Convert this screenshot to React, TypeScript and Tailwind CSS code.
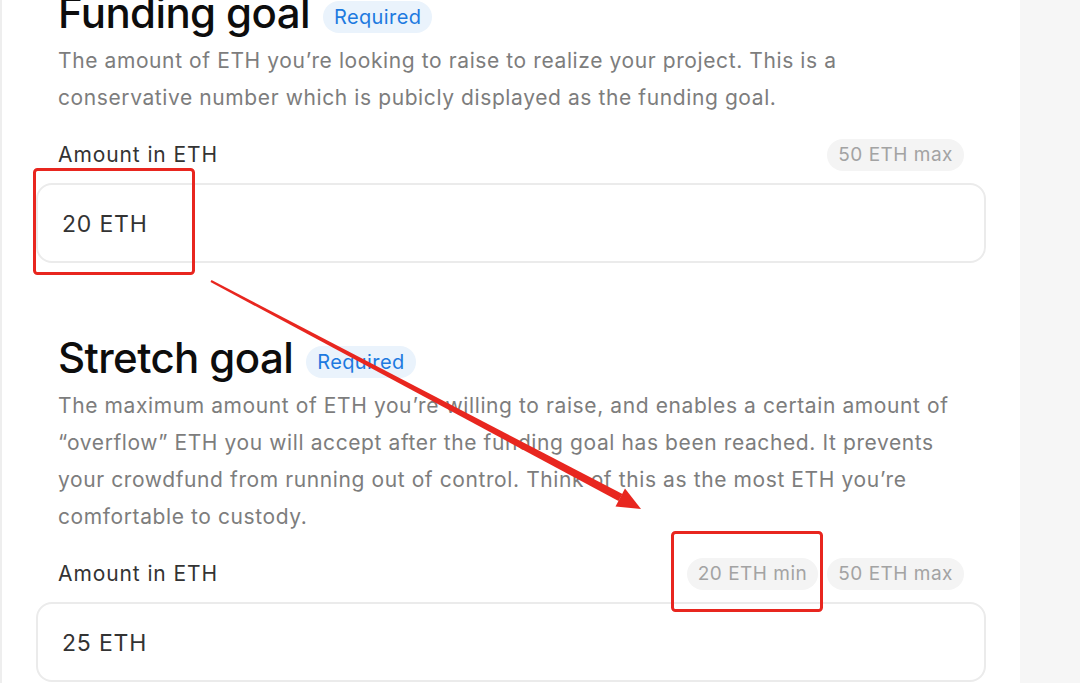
function Badge({ children }: { children: React.ReactNode }) {
  return (
    <span className="rounded-full bg-[#f4f4f4] px-[11px] h-[32px] flex items-center text-[19px] tracking-[0.5px] text-[#a3a3a3]">
      {children}
    </span>
  );
}

function GoalSection({
  title,
  text,
  value,
  badges,
}: {
  title: string;
  text: string[];
  value: string;
  badges: string[];
}) {
  return (
    <section className="flex flex-col">
      <div className="flex items-center px-[22px] h-[50px]">
        <h2 className="text-[42px] leading-[50px] font-medium text-[#0d0d0d] tracking-[-0.6px]">{title}</h2>
        <span className="ml-[13px] mt-[8px] rounded-full bg-[#eaf3fc] text-[#1d7ae0] text-[20px] tracking-[0.4px] h-[32px] px-[11px] flex items-center">
          Required
        </span>
      </div>
      <p className="mt-[4px] px-[22px] text-[21px] leading-[37px] text-[#7d7d7d] tracking-[0.6px]">
        {text.map((line, i) => (
          <span key={i} className="block whitespace-nowrap">
            {line}
          </span>
        ))}
      </p>
      <div className="mt-[23px] px-[22px] flex items-center justify-between h-[32px]">
        <span className="text-[21px] tracking-[0.9px] text-[#333]">Amount in ETH</span>
        <div className="flex gap-[9px]">
          {badges.map((b) => (
            <Badge key={b}>{b}</Badge>
          ))}
        </div>
      </div>
      <div className="mt-[12px] h-[80px] rounded-[16px] border-2 border-[#ebebeb] flex items-center px-[24px] pt-[2px] text-[23px] tracking-[0.8px] text-[#333]">
        {value}
      </div>
    </section>
  );
}

export default function App() {
  return (
    <div className="relative h-[683px] w-[1080px] overflow-hidden bg-white flex font-['Inter',sans-serif]">
      <div className="w-[1020px] border-l-2 border-[#eeeeee] pl-[34px] pr-[34px]">
        <div className="-mt-[12px] flex flex-col gap-[70px]">
          <GoalSection
            title="Funding goal"
            text={[
              "The amount of ETH you’re looking to raise to realize your project. This is a",
              "conservative number which is pubicly displayed as the funding goal.",
            ]}
            value="20 ETH"
            badges={["50 ETH max"]}
          />
          <GoalSection
            title="Stretch goal"
            text={[
              "The maximum amount of ETH you’re willing to raise, and enables a certain amount of",
              "“overflow” ETH you will accept after the funding goal has been reached. It prevents",
              "your crowdfund from running out of control. Think of this as the most ETH you’re",
              "comfortable to custody.",
            ]}
            value="25 ETH"
            badges={["20 ETH min", "50 ETH max"]}
          />
        </div>
      </div>
      <div className="flex-1 bg-[#f6f6f6]" />

      {/* red markup drawn over the screenshot */}
      <svg className="absolute inset-0 pointer-events-none" width="1080" height="683" viewBox="0 0 1080 683">
        <rect x="34.5" y="169.5" width="159" height="104" rx="3" fill="none" stroke="#e8261f" strokeWidth="3" />
        <rect x="672.5" y="532.5" width="149" height="78" rx="3" fill="none" stroke="#e8261f" strokeWidth="3" />
        <polygon points="210.5,282 211.5,280 622.5,494 618.5,501" fill="#e8261f" />
        <polygon points="641,509 615.5,506.5 625,488.5" fill="#e8261f" />
      </svg>
    </div>
  );
}
